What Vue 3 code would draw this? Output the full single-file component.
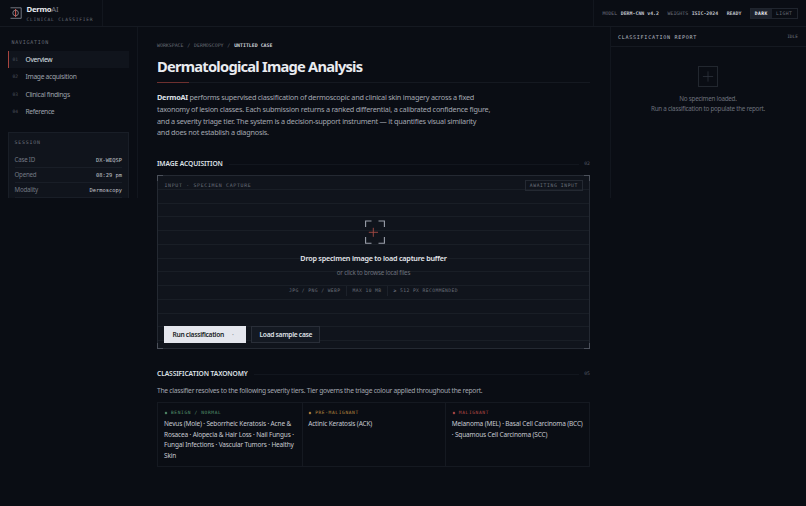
<template>
  <div class="app">
    <header class="topbar">
      <div class="brand">
        <svg class="logo" viewBox="0 0 12 12" fill="none">
          <path d="M0.5 0.8H11.2V11.3H0.5" stroke="#8b909b" stroke-width="0.8" />
          <circle cx="5.6" cy="6" r="2.8" stroke="#a5a9b2" stroke-width="0.7" />
          <path d="M5.6 2V10" stroke="#c8574f" stroke-width="1.1" />
        </svg>
        <div>
          <div class="brand-name"><b>Dermo</b>AI</div>
          <div class="brand-sub mono">CLINICAL CLASSIFIER</div>
        </div>
      </div>
      <div class="status mono">
        <span v-for="m in meta" :key="m.value" class="status-item">
          <span v-if="m.label" class="dim">{{ m.label }}</span>
          <b>{{ m.value }}</b>
        </span>
        <div class="toggle">
          <button :class="{ active: theme === 'dark' }" @click="theme = 'dark'">DARK</button>
          <button :class="{ active: theme === 'light' }" @click="theme = 'light'">LIGHT</button>
        </div>
      </div>
    </header>

    <div class="layout">
      <aside class="sidebar">
        <div class="side-label mono">NAVIGATION</div>
        <nav>
          <a v-for="(item, i) in nav" :key="item" class="nav-item" :class="{ active: i === current }" @click="current = i">
            <span class="nav-num mono">0{{ i + 1 }}</span>
            <span>{{ item }}</span>
          </a>
        </nav>
        <div class="session">
          <div class="session-title mono">SESSION</div>
          <div v-for="row in session" :key="row.label" class="session-row">
            <span>{{ row.label }}</span>
            <span class="session-value mono">{{ row.value }}</span>
          </div>
        </div>
      </aside>

      <main class="main">
        <div class="crumbs mono">
          <span>WORKSPACE</span><i>/</i><span>DERMOSCOPY</span><i>/</i><b>UNTITLED CASE</b>
        </div>
        <h1>Dermatological Image Analysis</h1>
        <div class="rule"></div>
        <p class="intro">
          <b>DermoAI</b> performs supervised classification of dermoscopic and clinical skin imagery across a fixed<br />
          taxonomy of lesion classes. Each submission returns a ranked differential, a calibrated confidence figure,<br />
          and a severity triage tier. The system is a decision-support instrument — it quantifies visual similarity<br />
          and does not establish a diagnosis.
        </p>

        <div class="section-head">
          <h2>IMAGE ACQUISITION</h2>
          <span class="line"></span>
          <span class="section-num mono">02</span>
        </div>

        <section class="capture">
          <span class="corner tl"></span>
          <span class="corner tr"></span>
          <span class="corner bl"></span>
          <span class="corner br"></span>
          <div class="capture-head mono">
            <span class="capture-label">INPUT · SPECIMEN CAPTURE</span>
            <span class="badge">AWAITING INPUT</span>
          </div>
          <div class="drop">
            <svg class="reticle" viewBox="0 0 20 24" fill="none">
              <path d="M0.6 7V1H6.5M13.5 1H19.4V7M19.4 17V23.3H13.5M6.5 23.3H0.6V17" stroke="#9a9faa" stroke-width="1.1" />
              <path d="M3.8 12.3H13M8.3 7.8V16.8" stroke="#a54b45" stroke-width="0.9" />
            </svg>
            <div class="drop-title">Drop specimen image to load capture buffer</div>
            <div class="drop-sub">or click to browse local files</div>
            <div class="drop-meta mono">
              <span>JPG / PNG / WEBP</span>
              <span>MAX 10 MB</span>
              <span>≥ 512 PX RECOMMENDED</span>
            </div>
          </div>
          <div class="actions">
            <button class="btn primary">Run classification <span class="dot">·</span></button>
            <button class="btn load">Load sample case</button>
          </div>
        </section>

        <div class="section-head">
          <h2>CLASSIFICATION TAXONOMY</h2>
          <span class="line"></span>
          <span class="section-num mono">05</span>
        </div>
        <p class="note">
          The classifier resolves to the following severity tiers. Tier governs the triage colour applied throughout the report.
        </p>
        <div class="tiers">
          <div v-for="tier in tiers" :key="tier.name" class="tier">
            <div class="tier-name mono" :class="tier.kind"><span class="gem"></span>{{ tier.name }}</div>
            <div v-for="line in tier.lines" :key="line" class="tier-line">{{ line }}</div>
          </div>
        </div>
      </main>

      <aside class="report">
        <div class="report-head mono">
          <span class="report-title">CLASSIFICATION REPORT</span>
          <span class="idle">IDLE</span>
        </div>
        <div class="empty">
          <div class="empty-icon">
            <svg viewBox="0 0 20 20"><path d="M4.3 10H15.7M10 4.3V15.7" stroke="#2e333d" stroke-width="0.9" /></svg>
          </div>
          <div class="empty-text first">No specimen loaded.</div>
          <div class="empty-text">Run a classification to populate the report.</div>
        </div>
      </aside>
    </div>
  </div>
</template>

<script setup>
import { ref } from 'vue'

const theme = ref('dark')
const current = ref(0)

const meta = [
  { label: 'MODEL', value: 'DERM-CNN v4.2' },
  { label: 'WEIGHTS', value: 'ISIC-2024' },
  { value: 'READY' },
]

const nav = ['Overview', 'Image acquisition', 'Clinical findings', 'Reference']

const session = [
  { label: 'Case ID', value: 'DX-WEQSP' },
  { label: 'Opened', value: '08:29 pm' },
  { label: 'Modality', value: 'Dermoscopy' },
]

const tiers = [
  {
    name: 'BENIGN / NORMAL',
    kind: 'benign',
    lines: [
      'Nevus (Mole) · Seborrheic Keratosis · Acne &',
      'Rosacea · Alopecia & Hair Loss · Nail Fungus ·',
      'Fungal Infections · Vascular Tumors · Healthy',
      'Skin',
    ],
  },
  { name: 'PRE-MALIGNANT', kind: 'pre', lines: ['Actinic Keratosis (ACK)'] },
  {
    name: 'MALIGNANT',
    kind: 'malignant',
    lines: ['Melanoma (MEL) · Basal Cell Carcinoma (BCC)', '· Squamous Cell Carcinoma (SCC)'],
  },
]
</script>

<style>
body {
  margin: 0;
  background: #0a0d14;
}
</style>

<style scoped>
* {
  box-sizing: border-box;
}

.app {
  height: 506px;
  overflow: hidden;
  background: #0a0d14;
  color: #a3a7b0;
  font-family: 'Noto Sans', 'Open Sans', sans-serif;
  font-size: 7px;
  white-space: nowrap;
}

.mono {
  font-family: 'DejaVu Sans Mono', monospace;
}

button {
  font-family: inherit;
  margin: 0;
  cursor: pointer;
}

.topbar {
  height: 27px;
  display: flex;
  justify-content: space-between;
  border-bottom: 1px solid #151921;
}

.brand {
  width: 103px;
  display: flex;
  padding: 4px 0 0 9.5px;
  gap: 5px;
  border-right: 1px solid #12161e;
}

.logo {
  width: 12px;
  height: 12px;
  margin-top: 3px;
}

.brand-name {
  font-size: 7.8px;
  line-height: 11px;
  letter-spacing: -0.3px;
  color: #737883;
}

.brand-name b {
  color: #e6e8ee;
}

.brand-sub {
  margin-top: 1px;
  font-size: 4.6px;
  line-height: 7px;
  letter-spacing: 0.75px;
  color: #666b76;
}

.status {
  width: 213px;
  display: flex;
  align-items: center;
  padding-left: 8.5px;
  border-left: 1px solid #12161e;
  font-size: 4.9px;
}

.status-item {
  display: flex;
  gap: 3.5px;
  margin-right: 8.5px;
}

.status-item b {
  color: #c0c4cc;
}

.dim {
  color: #6b707b;
}

.toggle {
  display: flex;
  height: 11px;
  border: 1px solid #20252e;
}

.toggle button {
  border: 0;
  padding: 0 4.5px;
  background: transparent;
  color: #666b76;
  font-size: 4.7px;
  line-height: 9px;
  letter-spacing: 0.4px;
}

.toggle button.active {
  padding: 0 3.9px;
  background: #1c212b;
  color: #e6e8ee;
  font-weight: bold;
}

.layout {
  display: flex;
  align-items: flex-start;
}

.sidebar {
  width: 138px;
  height: 171px;
  overflow: hidden;
  padding: 10px 8px 0;
  border-right: 1px solid #12161e;
}

.side-label {
  padding-left: 3.5px;
  font-size: 5px;
  line-height: 10px;
  letter-spacing: 0.73px;
  color: #666b76;
}

nav {
  margin-top: 3.5px;
}

.nav-item {
  display: flex;
  align-items: center;
  gap: 7px;
  height: 17.5px;
  padding-left: 3.5px;
  border-left: 1px solid transparent;
  color: #9ea2ab;
  font-size: 6.7px;
  letter-spacing: -0.3px;
}

.nav-item.active {
  background: #10141c;
  border-color: #a8443f;
  color: #dfe1e7;
}

.nav-num {
  width: 6px;
  font-size: 4.6px;
  letter-spacing: 0;
  color: #4b505b;
}

.session {
  height: 80px;
  margin-top: 11.5px;
  padding: 5px 6px 0 5.5px;
  background: #10141c;
  border: 1px solid #191e27;
}

.session-title {
  font-size: 4.9px;
  line-height: 8px;
  letter-spacing: 0.8px;
  color: #6b707b;
  margin-bottom: 6.5px;
}

.session-row {
  display: flex;
  justify-content: space-between;
  height: 15px;
  line-height: 14px;
  border-bottom: 1px solid #191e27;
  font-size: 6.2px;
  letter-spacing: -0.22px;
  color: #737883;
}

.session-value {
  font-size: 5.4px;
  letter-spacing: 0;
  color: #c0c4cc;
}

.main {
  width: 433px;
  margin-left: 19px;
  padding-top: 14px;
}

.crumbs {
  display: flex;
  font-size: 4.9px;
  line-height: 9px;
  color: #666b76;
}

.crumbs i {
  width: 10.6px;
  text-align: center;
  font-style: normal;
}

.crumbs b {
  color: #d0d3da;
}

h1 {
  margin: 6px 0 0;
  font-size: 14.7px;
  font-weight: 700;
  line-height: 20px;
  letter-spacing: -0.77px;
  color: #e9ebf0;
}

.rule {
  height: 1px;
  margin-top: 6px;
  background: linear-gradient(90deg, #6e302f 32px, #151921 32px);
}

.intro {
  margin: 9px 0 0;
  font-size: 7.3px;
  line-height: 11.75px;
  letter-spacing: -0.235px;
}

.intro b {
  color: #dfe1e7;
}

.section-head {
  display: flex;
  align-items: center;
  height: 12px;
  margin-top: 18px;
}

h2 {
  margin: 0;
  font-size: 6.7px;
  letter-spacing: -0.11px;
  font-weight: 600;
  color: #dfe1e7;
}

.line {
  flex: 1;
  height: 1px;
  margin: 2px 5px 0 6px;
  background: #12161e;
}

.section-num {
  font-size: 4.8px;
  color: #565b66;
}

.capture {
  position: relative;
  height: 174px;
  margin-top: 6px;
  border: 1px solid #242932;
  background: repeating-linear-gradient(180deg, transparent 0, transparent 12.75px, #191e26 12.75px, #191e26 13.75px) #10141c;
}

.corner {
  position: absolute;
  width: 6px;
  height: 6px;
  border: 0 solid #4b505a;
}

.tl {
  top: -1px;
  left: -1px;
  border-width: 1px 0 0 1px;
}

.tr {
  top: -1px;
  right: -1px;
  border-width: 1px 1px 0 0;
}

.bl {
  bottom: -1px;
  left: -1px;
  border-width: 0 0 1px 1px;
}

.br {
  bottom: -1px;
  right: -1px;
  border-width: 0 1px 1px 0;
}

.capture-head {
  display: flex;
  justify-content: space-between;
  align-items: center;
  height: 18px;
  padding: 0 6.5px;
  color: #6b707b;
}

.capture-label {
  font-size: 4.9px;
  letter-spacing: 0.68px;
}

.badge {
  padding: 0 3.5px;
  border: 1px solid #242932;
  font-size: 4.7px;
  line-height: 9px;
  letter-spacing: 0.62px;
}

.drop {
  display: flex;
  flex-direction: column;
  align-items: center;
  padding-top: 26px;
}

.reticle {
  width: 20px;
  height: 24px;
  margin-left: 3px;
}

.drop-title {
  margin-top: 8px;
  font-size: 7.2px;
  line-height: 12px;
  font-weight: 600;
  letter-spacing: -0.21px;
  color: #e2e4ea;
}

.drop-sub {
  margin-top: 4px;
  font-size: 6.2px;
  line-height: 10px;
  letter-spacing: -0.19px;
  color: #6b707b;
}

.drop-meta {
  display: flex;
  margin-top: 8px;
  font-size: 4.7px;
  line-height: 10px;
  letter-spacing: 0.4px;
  color: #666b76;
}

.drop-meta span + span {
  margin-left: 5.5px;
  padding-left: 5.5px;
  border-left: 1px solid #1c212a;
}

.actions {
  display: flex;
  gap: 5.5px;
  margin-top: 30px;
  padding-left: 6px;
}

.btn {
  height: 17px;
  padding: 0 7.5px;
  border: 1px solid #292e38;
  background: #141922;
  color: #dfe1e7;
  font-size: 6.7px;
  line-height: 14px;
  font-weight: 600;
  letter-spacing: -0.3px;
  text-align: left;
}

.primary {
  width: 81.5px;
  border-color: #e4e6ed;
  background: #e4e6ed;
  color: #191d25;
}

.load {
  width: 69px;
}

.dot {
  margin-left: 6.5px;
  color: #8b909b;
}

.note {
  margin: 6px 0 0;
  font-size: 6.7px;
  line-height: 11px;
  letter-spacing: -0.257px;
}

.tiers {
  display: grid;
  grid-template-columns: repeat(3, minmax(0, 1fr));
  height: 65px;
  margin-top: 6px;
  border: 1px solid #151921;
}

.tier {
  padding: 5.5px 0 0 6px;
}

.tier + .tier {
  padding-left: 5.5px;
  border-left: 1px solid #151921;
}

.tier-name {
  display: flex;
  align-items: center;
  margin-bottom: 2.5px;
  font-size: 4.5px;
  line-height: 8px;
  letter-spacing: 0.65px;
}

.gem {
  width: 2px;
  height: 2px;
  margin: 0 4px 0 1px;
  background: currentColor;
  transform: rotate(45deg);
}

.benign {
  color: #56966f;
}

.pre {
  color: #bd8b40;
}

.malignant {
  color: #b94c47;
}

.tier-line {
  font-size: 6.5px;
  line-height: 10.7px;
  letter-spacing: -0.16px;
  color: #c6c9d0;
}

.report {
  width: 196px;
  height: 171px;
  margin-left: 20px;
  border-left: 1px solid #12161e;
}

.report-head {
  display: flex;
  justify-content: space-between;
  align-items: center;
  height: 20px;
  padding: 0 8px 0 7px;
  border-bottom: 1px solid #151921;
}

.report-title {
  font-size: 5.1px;
  letter-spacing: 0.7px;
  color: #b4b8c0;
}

.idle {
  font-size: 4.5px;
  color: #737883;
}

.empty {
  display: flex;
  flex-direction: column;
  align-items: center;
  padding: 19px 1px 0 0;
}

.empty-icon {
  width: 20px;
  height: 21px;
  border: 1px solid #22272f;
}

.empty-icon svg {
  display: block;
  width: 18px;
  height: 19px;
}

.empty-text {
  font-size: 6.3px;
  line-height: 10px;
  letter-spacing: -0.26px;
  color: #6b707b;
}

.first {
  margin-top: 7px;
}
</style>
